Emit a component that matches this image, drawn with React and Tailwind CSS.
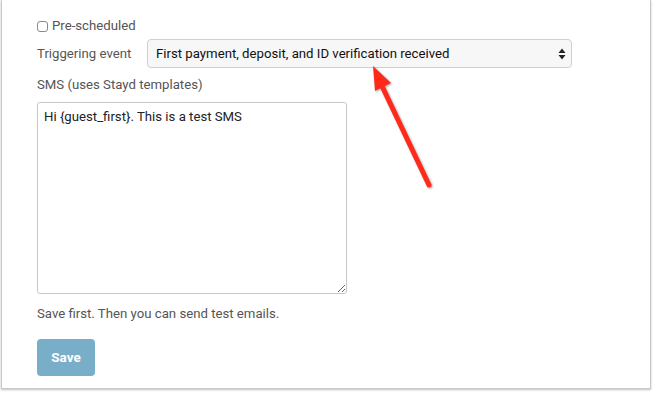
import { useState } from "react";

function UpDownIcon() {
  return (
    <svg width="8" height="12" viewBox="0 0 8 12" className="text-[#222]">
      <path d="M4 0.5L7.5 5H0.5z" fill="currentColor" />
      <path d="M4 11.5L7.5 7H0.5z" fill="currentColor" />
    </svg>
  );
}

function RedArrow() {
  return (
    <svg
      className="absolute left-0 top-0 pointer-events-none drop-shadow-[1px_1px_1px_rgba(0,0,0,0.35)]"
      width="657"
      height="393"
      viewBox="0 0 657 393"
    >
      <line
        x1="429"
        y1="185"
        x2="381"
        y2="84"
        stroke="#ff2a1a"
        strokeWidth="5"
        strokeLinecap="round"
      />
      <path d="M373 66L391 83L375 91z" fill="#ff2a1a" />
    </svg>
  );
}

export default function App() {
  const [text, setText] = useState("Hi {guest_first}. This is a test SMS");

  return (
    <div
      className="relative w-[657px] h-[393px] bg-white overflow-hidden text-[13.2px] text-[#555]"
      style={{ fontFamily: "Roboto, 'Liberation Sans', sans-serif" }}
    >
      {/* Panel */}
      <div className="ml-px w-[650px] h-[389px] bg-white border-x border-b border-[#c8c8c8] shadow-[0_1px_2px_rgba(0,0,0,0.25)] pl-[35px] pt-[16px]">
        <label className="flex items-center h-[20px]">
          <span className="w-[11px] h-[11px] border border-[#8a8a8a] rounded-[3px] bg-white" />
          <span className="ml-[4px]">Pre-scheduled</span>
        </label>

        <div className="flex items-center h-[29px] mt-[3px]">
          <span className="w-[110px]">Triggering event</span>
          <div className="flex items-center justify-between w-[425px] h-[29px] bg-[#f7f7f7] border border-[#cfcfcf] rounded-[4px] pl-[8px] pr-[5px] text-[#111]">
            <span>First payment, deposit, and ID verification received</span>
            <UpDownIcon />
          </div>
        </div>

        <div className="flex items-center h-[20px] mt-[7px]">
          SMS (uses Stayd templates)
        </div>

        <textarea
          className="block mt-[7px] w-[310px] h-[192px] border border-[#c8c8c8] rounded-[3px] px-[6px] py-[5px] text-[#222] text-[13.2px] leading-[18px] resize outline-none"
          style={{ fontFamily: "Roboto, 'Liberation Sans', sans-serif" }}
          value={text}
          onChange={(e) => setText(e.target.value)}
        />

        <div className="flex items-center h-[20px] mt-[10px]">
          Save first. Then you can send test emails.
        </div>

        <button className="mt-[15px] w-[58px] h-[37px] rounded-[4px] bg-[#79aec9] text-white font-bold text-[13.5px]">
          Save
        </button>
      </div>

      <RedArrow />
    </div>
  );
}
